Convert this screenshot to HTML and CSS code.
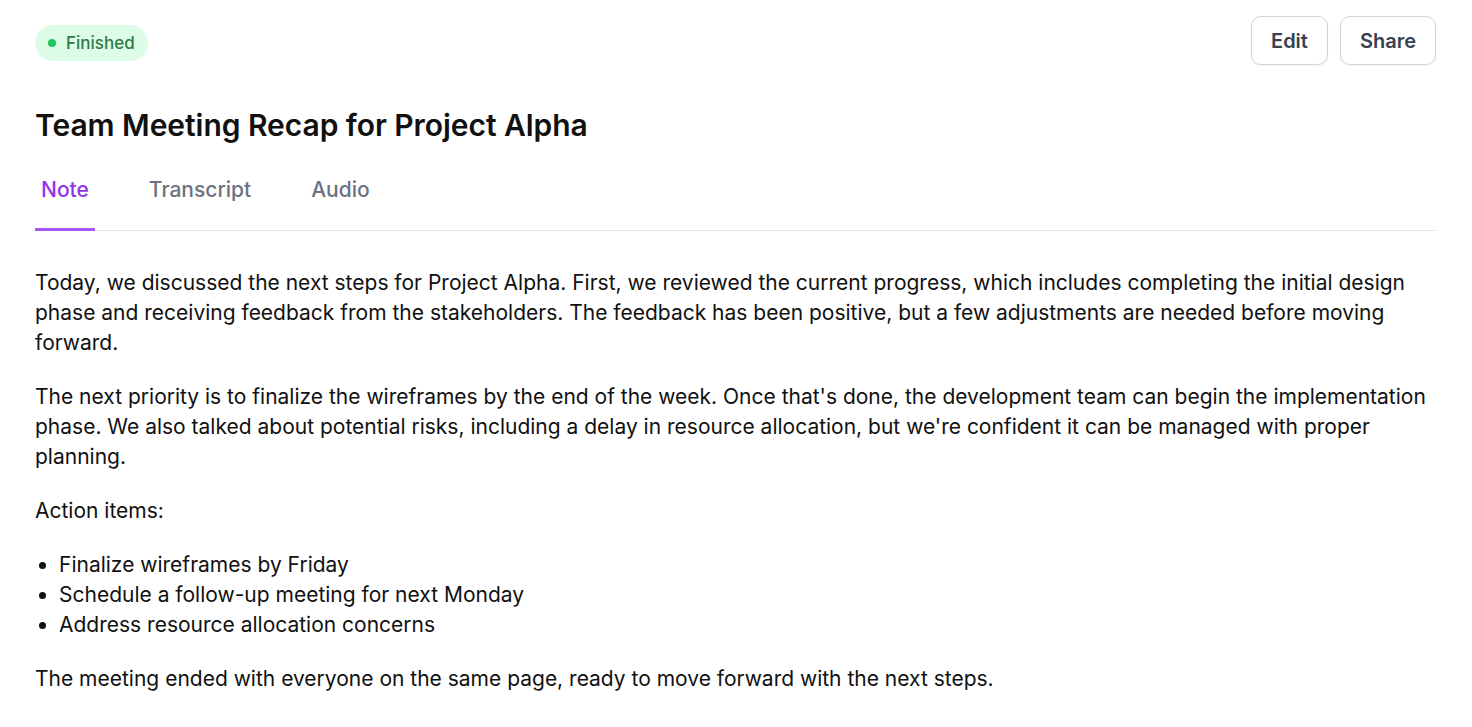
FILE: index.html
```html
<!DOCTYPE html>
<html lang="en">
<head>
<meta charset="utf-8">
<title>Team Meeting Recap for Project Alpha</title>
<link rel="stylesheet" href="styles.css">
</head>
<body>
<div class="page">
  <header class="top">
    <span class="badge"><span class="dot"></span>Finished</span>
    <div class="actions">
      <button class="btn">Edit</button>
      <button class="btn">Share</button>
    </div>
  </header>
  <h1 class="title">Team Meeting Recap for Project Alpha</h1>
  <nav class="tabs">
    <a class="tab active">Note</a>
    <a class="tab">Transcript</a>
    <a class="tab">Audio</a>
  </nav>
  <article class="note">
    <p>Today, we discussed the next steps for Project Alpha. First, we reviewed the current progress, which includes completing the initial design phase and receiving feedback from the stakeholders. The feedback has been positive, but a few adjustments are needed before moving forward.</p>
    <p>The next priority is to finalize the wireframes by the end of the week. Once that's done, the development team can begin the implementation phase. We also talked about potential risks, including a delay in resource allocation, but we're confident it can be managed with proper planning.</p>
    <p>Action items:</p>
    <ul>
      <li>Finalize wireframes by Friday</li>
      <li>Schedule a follow-up meeting for next Monday</li>
      <li>Address resource allocation concerns</li>
    </ul>
    <p>The meeting ended with everyone on the same page, ready to move forward with the next steps.</p>
  </article>
</div>
</body>
</html>
```
FILE: styles.css
```css
* { box-sizing: border-box; }
html, body { margin: 0; padding: 0; background: #fff; }
body { font-family: Inter, "Noto Sans", sans-serif; color: #111; }
.page { padding: 16px 36px 0 35px; }
.top { display: flex; justify-content: space-between; align-items: flex-start; }
.badge {
  margin-top: 9px;
  display: inline-flex; align-items: center; gap: 10px;
  height: 36px; padding: 0 13px 0 13px;
  background: #dcfce7; color: #2f7a45; border-radius: 18px;
  font-size: 17px; font-weight: 500;
}
.dot { width: 8px; height: 8px; border-radius: 50%; background: #22c55e; }
.actions { display: flex; gap: 12px; }
.btn {
  font-family: inherit; font-size: 20px; font-weight: 600; color: #374151;
  background: #fff; border: 1px solid #d1d5db; border-radius: 10px;
  height: 49px; padding: 0 19px; box-shadow: 0 1px 2px rgba(0,0,0,0.06);
}
.title { margin: 40px 0 0 0; font-size: 30px; font-weight: 600; line-height: 40px; color: #111; letter-spacing: -0.05px; }
.tabs { display: flex; gap: 48px; border-bottom: 1px solid #e5e7eb; margin-top: 33px; }
.tab {
  padding: 0 6px 26px 6px; font-size: 21px; font-weight: 500; color: #6b7280;
  border-bottom: 3px solid transparent; margin-bottom: -1px; line-height: 24px;
}
.tab.active { color: #9333ea; border-bottom-color: #a855f7; }
.note { padding-top: 37px; font-size: 21px; line-height: 30px; color: #111; }
.note p { margin: 0 0 24px 0; }
.note ul { margin: 0 0 24px 0; padding-left: 24px; }
```
